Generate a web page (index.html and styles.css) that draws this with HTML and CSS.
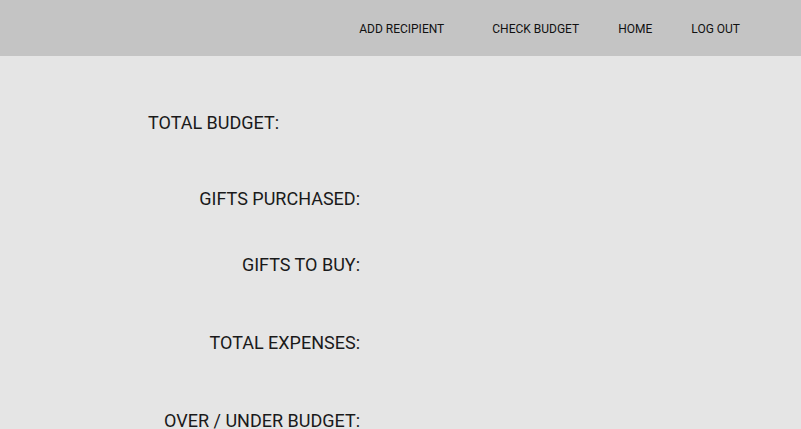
FILE: index.html
```html
<!DOCTYPE html>
<html>
<head>
<meta charset="utf-8">
<link rel="stylesheet" href="styles.css">
</head>
<body>
<header class="topbar">
  <nav class="nav">
    <a class="nav-link nav-first">ADD RECIPIENT</a>
    <a class="nav-link">CHECK BUDGET</a>
    <a class="nav-link">HOME</a>
    <a class="nav-link">LOG OUT</a>
  </nav>
</header>
<main class="content">
  <div class="labels">
    <div class="label label-left gap-a">TOTAL BUDGET:</div>
    <div class="label gap-b">GIFTS PURCHASED:</div>
    <div class="label gap-c">GIFTS TO BUY:</div>
    <div class="label gap-c">TOTAL EXPENSES:</div>
    <div class="label">OVER / UNDER BUDGET:</div>
  </div>
</main>
</body>
</html>
```
FILE: styles.css
```css
html, body {
  margin: 0;
  padding: 0;
  height: 100%;
  overflow: hidden;
}
body {
  background: #e5e5e5;
  font-family: Roboto, "Liberation Sans", sans-serif;
  color: #1a1a1a;
}
.topbar {
  box-sizing: border-box;
  height: 56px;
  background: #c4c4c4;
  display: flex;
  align-items: center;
  justify-content: flex-end;
  padding-top: 2px;
  padding-right: 61px;
}
.nav {
  display: flex;
  gap: 39px;
}
.nav-link {
  font-size: 12px;
  line-height: 14px;
  color: #111;
}
.nav-first {
  margin-right: 9px;
}
.content {
  padding-top: 57px;
  padding-left: 148px;
}
.labels {
  width: 212px;
  display: flex;
  flex-direction: column;
}
.label {
  font-size: 18px;
  line-height: 20px;
  height: 20px;
  text-align: right;
  white-space: nowrap;
}
.label-left {
  text-align: left;
}
.gap-a { margin-bottom: 56px; }
.gap-b { margin-bottom: 46px; }
.gap-c { margin-bottom: 58px; }
```
